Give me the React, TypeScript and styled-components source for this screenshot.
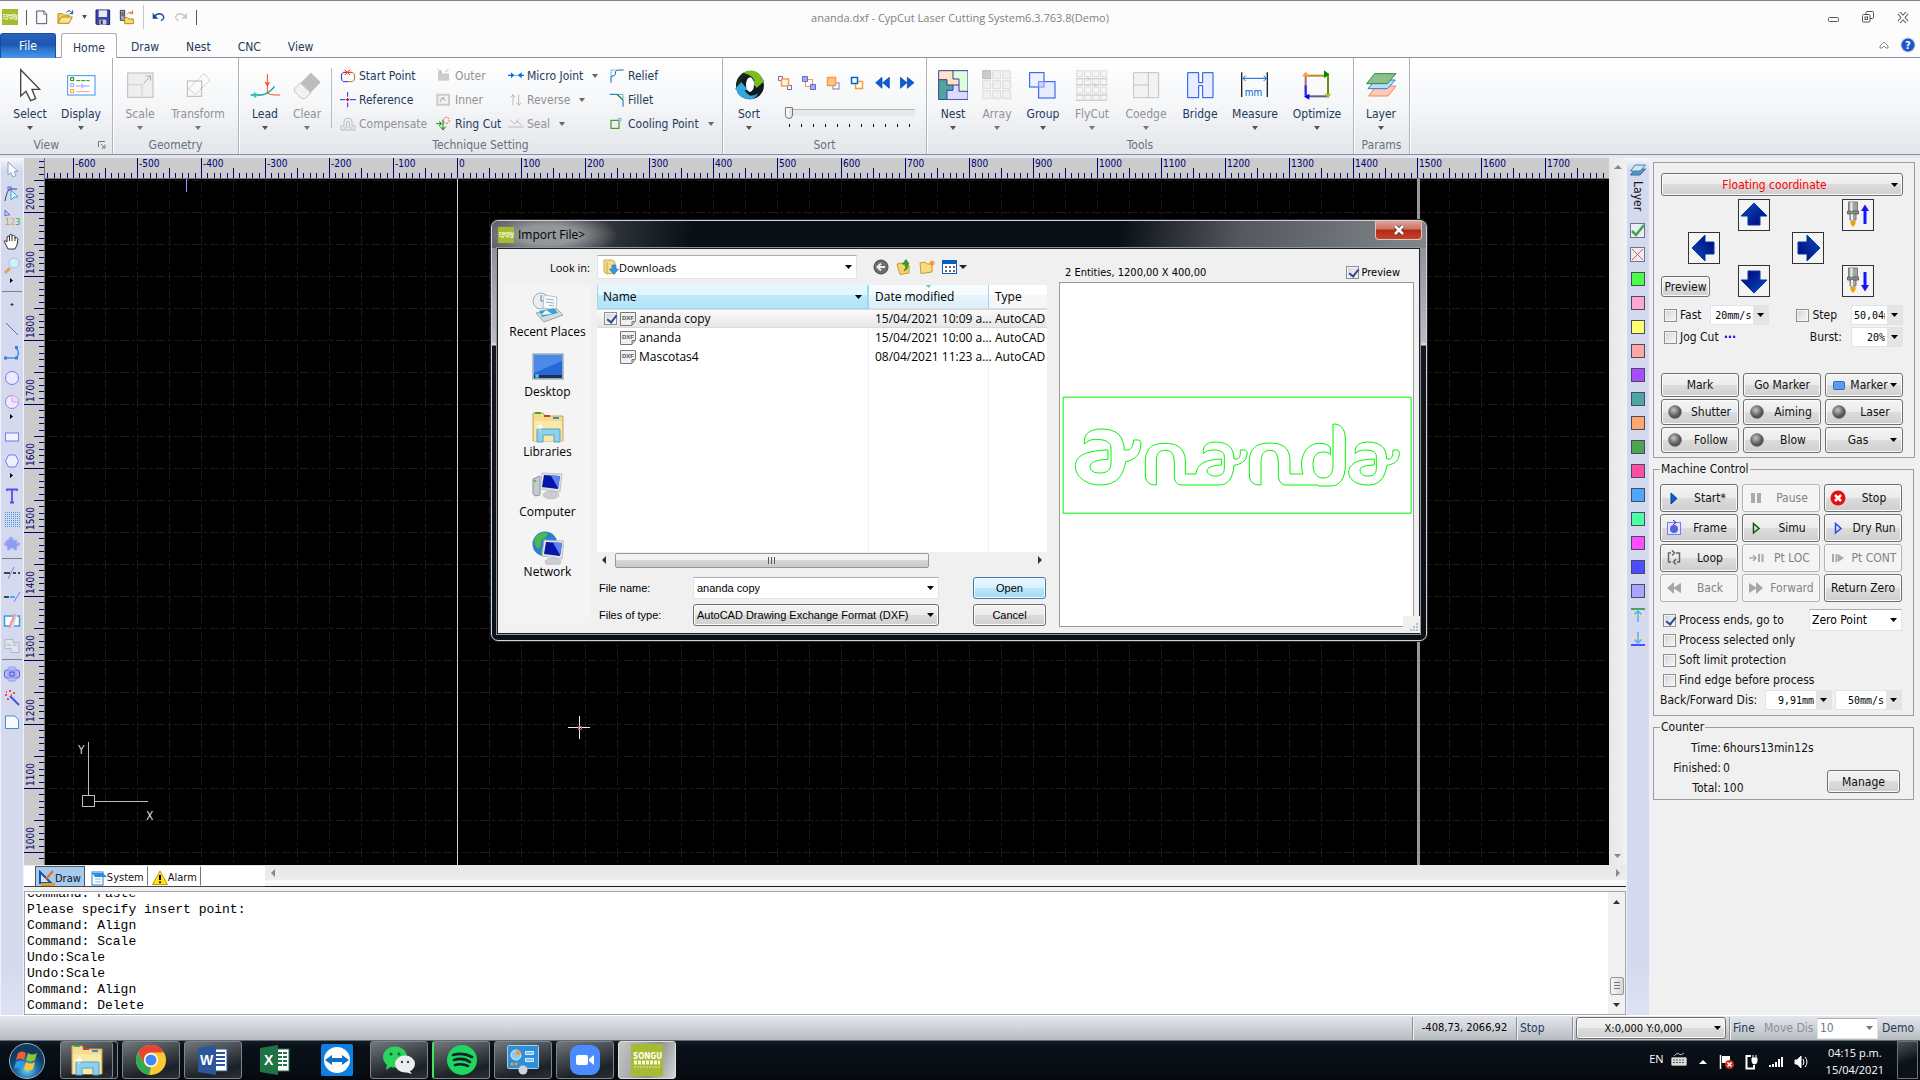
import React from "react";
import styled, { createGlobalStyle, css } from "styled-components";

const UI = '"DejaVu Sans Condensed", "DejaVu Sans", sans-serif';
const SEGOE = '"Open Sans", "Noto Sans", sans-serif';
const ARIAL = '"Liberation Sans", sans-serif';
const MONO = '"Liberation Mono", monospace';
const NAVY = "#1e395b";

const Global = createGlobalStyle`
  * { box-sizing: border-box; }
  body { margin: 0; background: #f0f0f0; font-family: ${UI}; font-size: 12px; color: #111; }
  button, input, select { font: inherit; color: inherit; margin: 0; }
  button { padding: 0; background: none; border: 0; }
  svg { display: block; flex: none; }
`;

/* ---------- shared drawing helper: art is plotted on a 3x grid ---------- */
type Box = [number, number, number, number];
const Art = ({ box, children }: { box: Box; children: React.ReactNode }) => (
  <svg width={box[2] / 3} height={box[3] / 3} viewBox={box.join(" ")} fill="none" aria-hidden="true">
    {children}
  </svg>
);
const Caret = ({ color = "#000", w = 7 }: { color?: string; w?: number }) => (
  <svg width={w} height={4} viewBox="0 0 8 4" preserveAspectRatio="none" aria-hidden="true">
    <path d="M0 0H8L4 4Z" fill={color} />
  </svg>
);

/* ---------- shell ---------- */
const Shell = styled.div`
  position: relative;
  display: flex;
  flex-direction: column;
  height: 100vh;
  min-width: 1440px;
  overflow: hidden;
  background: #f0f0f0;
`;

/* ---------- title bar ---------- */
const TitleBar = styled.header`
  display: grid;
  grid-template-columns: 1fr auto 1fr;
  align-items: center;
  height: 33px;
  border-top: 1px solid #82858f;
  background: #fcfcfc;
`;
const Quick = styled.div`
  display: flex;
  align-items: center;
  gap: 8px;
  padding-left: 2px;
`;
const QuickSep = styled.i<{ $tall?: boolean }>`
  width: 1px;
  height: ${(p) => (p.$tall ? 24 : 15)}px;
  background: ${(p) => (p.$tall ? "#c4c6ca" : "#555")};
`;
const IconButton = styled.button`
  display: grid;
  place-items: center;
`;
const Caption = styled.h1`
  margin: 0;
  font-family: ${SEGOE};
  font-size: 11px;
  font-weight: 400;
  color: #808080;
`;
const WinButtons = styled.div<{ $gap: number; $end: number }>`
  display: flex;
  justify-content: flex-end;
  align-items: center;
  gap: ${(p) => p.$gap}px;
  padding-right: ${(p) => p.$end}px;
`;
const Tabs = styled.nav`
  display: flex;
  height: 25px;
  background: #fcfcfc;
  border-bottom: 1px solid #8b8e98;
`;
const FileTab = styled.button`
  width: 56px;
  height: 25px;
  margin-right: 5px;
  color: #fff;
  border: 1px solid #1b4fa4;
  border-bottom: 0;
  border-radius: 3px 3px 0 0;
  background: linear-gradient(#2a63bd, #1d56b0 45%, #2d70ca 60%, #4698ea);
`;
const Tab = styled.button<{ $on?: boolean }>`
  height: 24px;
  margin-right: 1px;
  padding: 4px ${(p) => (p.$on ? 11 : 13)}px 0;
  color: ${NAVY};
  ${(p) =>
    p.$on &&
    css`
      height: 25px;
      border: 1px solid #a9acb3;
      border-bottom: 0;
      border-radius: 3px 3px 0 0;
      background: #fff;
    `}
`;
const TabsEnd = styled.div`
  display: flex;
  align-items: center;
  gap: 11px;
  margin-left: auto;
  padding-right: 4px;
`;

/* ---------- ribbon ---------- */
const Ribbon = styled.div`
  display: flex;
  height: 97px;
  background: linear-gradient(#fff, #f4f6f8 50%, #e3e6ea);
  border-bottom: 1px solid #8b8e98;
`;
const RGroup = styled.section<{ $w: number }>`
  display: flex;
  flex-direction: column;
  flex: none;
  width: ${(p) => p.$w}px;
  border-right: 1px solid #b0b3b9;
  box-shadow: 1px 0 #fff;
`;
const RBody = styled.div<{ $pad?: number }>`
  display: flex;
  height: 78px;
  padding-left: ${(p) => p.$pad ?? 0}px;
`;
const RLabel = styled.div<{ $launch?: boolean }>`
  display: flex;
  justify-content: ${(p) => (p.$launch ? "flex-end" : "center")};
  align-items: center;
  gap: 39px;
  height: 18px;
  padding-right: ${(p) => (p.$launch ? 6 : 0)}px;
  color: #68717f;
`;
const Big = styled.button<{ $w: number }>`
  display: flex;
  flex: none;
  flex-direction: column;
  align-items: center;
  width: ${(p) => p.$w}px;
  padding-top: 9px;
  color: ${NAVY};
  white-space: nowrap;
  &:disabled { color: #929292; }
`;
const BigIcon = styled.span`
  display: grid;
  place-items: center;
  height: 36px;
`;
const BigText = styled.span`
  line-height: 16px;
  margin: 3px 0 4px;
`;
const RDivider = styled.i`
  width: 1px;
  height: 60px;
  margin: 10px 8px 0 3px;
  background: #b9bcc2;
`;
const SmallCol = styled.div<{ $w: number }>`
  display: flex;
  flex-direction: column;
  flex: none;
  width: ${(p) => p.$w}px;
  padding-top: 6px;
`;
const Small = styled.button`
  display: grid;
  grid-template-columns: 16px auto auto 1fr;
  column-gap: 3px;
  align-items: center;
  height: 24px;
  color: ${NAVY};
  text-align: left;
  white-space: nowrap;
  &:disabled { color: #929292; }
  svg:nth-of-type(2) { margin-left: 6px; }
`;
const SortPane = styled.div`
  display: flex;
  flex-direction: column;
  padding: 17px 0 0 7px;
  width: 146px;
`;
const SortIcons = styled.div`
  display: flex;
  align-items: center;
  gap: 10px;
  height: 16px;
`;
const SortSlider = styled.input`
  appearance: none;
  width: 130px;
  height: 14px;
  margin: 15px 0 0 7px;
  background: linear-gradient(#b4b6b9, #b4b6b9) 0 3px / 100% 1px no-repeat, linear-gradient(#e8eaea, #e8eaea) 0 4px / 100% 6px no-repeat;
  &::-webkit-slider-thumb {
    appearance: none;
    width: 8px;
    height: 12px;
    border: 1px solid #777;
    border-radius: 1px 1px 4px 4px;
    background: linear-gradient(90deg, #fff, #ddd);
  }
`;

type BigProps = { label: string; w: number; off?: boolean; noCaret?: boolean; children: React.ReactNode };
const BigButton = ({ label, w, off, noCaret, children }: BigProps) => (
  <Big $w={w} disabled={off}>
    <BigIcon>{children}</BigIcon>
    <BigText>{label}</BigText>
    {!noCaret && <Caret color={off ? "#777" : "#555"} w={6} />}
  </Big>
);
type SmallProps = { label: string; off?: boolean; caret?: boolean; children: React.ReactNode };
const SmallButton = ({ label, off, caret, children }: SmallProps) => (
  <Small disabled={off}>
    {children}
    <span>{label}</span>
    {caret && <Caret color="#666" w={6} />}
  </Small>
);

/* ---------- brand mark ---------- */
const Brand = ({ size }: { size: number }) => (
  <svg width={size} height={size} viewBox="0 0 48 48" aria-hidden="true">
    <rect width="48" height="48" fill="#a8ba32" />
    <path d="M3 17h7M3 22h7M13 17h6v5h-6zM23 22v-6l5 6v-6M38 16h-6v6h6v-3M41 16v6h5v-6M3 28h5M11 26v5h5v-5M20 26h5v5M29 31v-5h4v5M37 26h8v5h-8" stroke="#f4f8d8" strokeWidth="3" fill="none" />
  </svg>
);

/* ---------- workspace ---------- */
const Work = styled.main`
  display: flex;
  flex: 1;
  min-height: 0;
  border-top: 3px solid #e4e7ef;
`;
const ToolStrip = styled.aside`
  display: flex;
  flex: none;
  flex-direction: column;
  width: 24px;
  background: linear-gradient(#f6f8fc, #d4d9ed 12px, #d4d9ed 94%, #dde2f3);
  border-left: 1px solid #eef1fa;
  border-right: 1px solid #eef1fa;
`;
const Tool = styled.button`
  display: grid;
  place-items: center;
  height: 24px;
`;
const Flyout = styled.button`
  display: flex;
  justify-content: center;
  height: 11px;
`;
const StripRule = styled.hr`
  width: 20px;
  height: 1px;
  margin: 2px auto;
  border: 0;
  background: #7d7f88;
`;
const Center = styled.div`
  display: flex;
  flex: 1;
  flex-direction: column;
  min-width: 0;
`;
const Board = styled.div`
  display: grid;
  grid-template-columns: 21px minmax(0, 1fr) 17px;
  grid-template-rows: 21px minmax(0, 1fr);
  flex: 1;
  min-height: 0;
`;
const Ruler = styled.div<{ $side?: boolean }>`
  overflow: hidden;
  background: #cbcbcb;
  ${(p) => (p.$side ? "grid-row: 1 / 3; border-right: 1px solid #777;" : "border-bottom: 1px solid #777;")}
`;
const RulerText = styled.text`
  font: 10px ${UI};
  fill: #00007c;
`;
const Stage = styled.div`
  overflow: hidden;
  background: #000;
`;
const VScroll = styled.div`
  display: flex;
  grid-row: 1 / 3;
  grid-column: 3;
  flex-direction: column;
  justify-content: space-between;
  align-items: center;
  padding: 7px 0;
  background: linear-gradient(90deg, #e7e7e7, #f1f1f1);
`;
const BottomBar = styled.div`
  display: flex;
  flex: none;
  height: 22px;
  border-top: 1px solid #e8e8e8;
`;
const LogTabs = styled.div`
  display: flex;
  width: 241px;
  padding-left: 11px;
  background: #fff;
  border-bottom: 1px solid #444;
`;
const LogTab = styled.button<{ $on?: boolean }>`
  display: flex;
  align-items: center;
  padding: 3px 3px 0;
  font-size: 11px;
  border: 1px solid transparent;
  border-right-color: #777;
  ${(p) => p.$on && "background: #a6caf0; border-color: #555; border-bottom: 0; margin-right: 2px;"}
`;
const HScroll = styled.div`
  display: flex;
  flex: 1;
  justify-content: space-between;
  align-items: center;
  height: 21px;
  padding: 0 6px 6px;
  background: linear-gradient(#e8e8e8, #ededed 14px, #fff 15px, #f4f4f4 19px);
  border-bottom: 1px solid #222;
`;
const LogBox = styled.div`
  display: flex;
  flex: none;
  height: 124px;
  margin-top: 4px;
  border: 1px solid #a2a5ab;
  background: #fff;
`;
const LogLines = styled.div`
  display: flex;
  flex: 1;
  flex-direction: column;
  justify-content: flex-end;
  overflow: hidden;
  margin-top: 2px;
  padding-left: 2px;
  font: 13px/16px ${MONO};
  color: #000;
`;
const LogLine = styled.div`
  flex: none;
`;
const LogScroll = styled.div`
  display: flex;
  flex-direction: column;
  align-items: center;
  width: 17px;
  padding: 8px 0 7px;
  background: #f1f1f1;
`;
const LogThumb = styled.i`
  width: 14px;
  height: 18px;
  margin: auto 0 8px;
  border: 1px solid #979797;
  border-radius: 2px;
  background: repeating-linear-gradient(#777 0 1px, transparent 1px 3px) 3px 4px / 6px 8px no-repeat, linear-gradient(90deg, #f6f6f6, #d6d6d6);
`;

/* ---------- layer strip ---------- */
const LayerText = styled.span`
  writing-mode: vertical-rl;
  align-self: center;
  height: 36px;
  margin: -1px 0 2px;
  line-height: 14px;
`;
const Swatch = styled.i<{ $c: string }>`
  width: 14px;
  height: 14px;
  border: 1px solid #4a4d55;
  background: ${(p) => p.$c};
`;

/* ---------- control panel ---------- */
const Panel = styled.aside`
  flex: none;
  width: 270px;
  padding: 4px 5px 0 3px;
`;
const Card = styled.section`
  padding: 10px 11px 4px 7px;
  border: 1px solid #9b9da1;
`;
const Field = styled.fieldset`
  margin: 4px 1px 0 0;
  padding: 8px 11px 5px 6px;
  border: 1px solid #9b9da1;
  min-width: 0;
`;
const Legend = styled.legend`
  padding: 0 1px;
  line-height: 14px;
`;
const face = css`
  border: 1px solid #707070;
  border-radius: 3px;
  background: linear-gradient(#f4f4f4, #ebebeb 50%, #dcdcdc 50%, #cfcfcf);
  box-shadow: inset 0 0 0 1px #fafafa;
`;
const PushButton = styled.button<{ $h?: number; $w?: number }>`
  display: flex;
  align-items: center;
  justify-content: center;
  height: ${(p) => p.$h ?? 26}px;
  ${(p) => p.$w && `width: ${p.$w}px;`}
  ${face}
  white-space: nowrap;
  overflow: hidden;
  &:disabled { color: #838383; border-color: #adb2b5; background: #f4f4f4; }
`;
const BtnIcon = styled.span`
  display: grid;
  place-items: center;
  flex: none;
  width: 18px;
  margin-left: 4px;
`;
const BtnText = styled.span`
  flex: 1;
  text-align: center;
`;
const BtnTail = styled.span`
  margin-right: 5px;
`;
const ButtonGrid = styled.div<{ $top: number }>`
  display: grid;
  grid-template-columns: repeat(3, minmax(0, 1fr));
  gap: 2px 4px;
  margin-top: ${(p) => p.$top}px;
`;
const JogPad = styled.div`
  display: grid;
  grid-template-columns: 27px 32px 18px 32px 22px 32px 18px 32px;
  grid-template-rows: 32px 32px 32px;
  row-gap: 1px;
  margin-top: 3px;
`;
const JogButton = styled.button<{ $c: number; $r: number }>`
  display: grid;
  place-items: center;
  grid-column: ${(p) => p.$c};
  grid-row: ${(p) => p.$r};
  border: 1px solid #333;
  background: #f4f4f4;
`;
const JogPreview = styled(PushButton)`
  grid-column: 1 / 3;
  grid-row: 3;
  align-self: end;
  width: 49px;
`;
const Row = styled.div<{ $top?: number }>`
  display: flex;
  align-items: center;
  height: 20px;
  margin-top: ${(p) => p.$top ?? 0}px;
`;
const Spacer = styled.i<{ $w?: number }>`
  flex: ${(p) => (p.$w ? `0 0 ${p.$w}px` : "1")};
`;
const Check = styled.label`
  display: flex;
  align-items: center;
  gap: 3px;
  padding-left: 3px;
  white-space: nowrap;
`;
const Tick = styled.input.attrs({ type: "checkbox" })`
  appearance: none;
  position: relative;
  flex: none;
  width: 13px;
  height: 13px;
  border: 1px solid #8e8f8f;
  background: linear-gradient(135deg, #cfd2d6, #fafafa);
  box-shadow: inset 0 0 0 1px #f4f4f4;
  &:checked::after {
    content: "";
    position: absolute;
    left: 4px;
    top: 0;
    width: 4px;
    height: 8px;
    border: solid #2f4a8c;
    border-width: 0 2px 2px 0;
    transform: rotate(38deg);
  }
`;
const Dots = styled.button`
  margin-left: 5px;
  color: #0000ff;
  font-weight: 700;
`;
const PickBox = styled.span<{ $w?: number; $h: number; $look: "face" | "plain" | "spin"; $mr?: number }>`
  display: grid;
  grid-template-columns: minmax(0, 1fr) 16px;
  align-items: center;
  flex: none;
  ${(p) => (p.$w ? `width: ${p.$w}px;` : "width: 100%;")}
  height: ${(p) => p.$h}px;
  margin-right: ${(p) => p.$mr ?? 0}px;
  background: #fff;
  border: 1px solid #dfe3ea;
  border-top-color: #abadb3;
  ${(p) => p.$look === "face" && face}
  ${(p) => p.$look === "spin" && "border-top-color: #dfe3ea; background: linear-gradient(90deg, transparent calc(100% - 15px), #e4e4e4 0), #fff;"}
`;
const Pick = styled.select<{ $font?: string; $size?: number; $align?: string; $color?: string; $pad?: number }>`
  appearance: none;
  grid-area: 1 / 1 / 2 / 3;
  width: 100%;
  height: 100%;
  padding: 0 17px 0 ${(p) => p.$pad ?? 2}px;
  border: 0;
  background: transparent;
  font-family: ${(p) => p.$font ?? UI};
  font-size: ${(p) => p.$size ?? 12}px;
  text-align: ${(p) => p.$align ?? "left"};
  text-align-last: ${(p) => p.$align ?? "left"};
  color: ${(p) => p.$color ?? "#000"};
`;
const PickArrow = styled.span`
  grid-area: 1 / 2;
  justify-self: center;
  pointer-events: none;
`;
type DropProps = {
  name: string; value: string; w?: number; h: number; look?: "face" | "plain" | "spin";
  font?: string; size?: number; align?: string; color?: string; pad?: number; arrow?: string; mr?: number;
};
const Drop = ({ name, value, w, h, look = "plain", arrow, mr, ...t }: DropProps) => (
  <PickBox $w={w} $h={h} $look={look} $mr={mr}>
    <Pick aria-label={name} $font={t.font} $size={t.size} $align={t.align} $color={t.color} $pad={t.pad}>
      <option>{value}</option>
    </Pick>
    <PickArrow><Caret color={arrow} /></PickArrow>
  </PickBox>
);
const Spin = (p: { name: string; value: string; w: number; mr?: number }) => (
  <Drop {...p} h={20} look="spin" font='"DejaVu Sans Mono", monospace' size={10} align="right" />
);
const CounterBody = styled.div`
  display: flex;
  justify-content: space-between;
  align-items: flex-end;
  padding-right: 2px;
`;
const Stats = styled.dl`
  display: grid;
  grid-template-columns: 61px auto;
  column-gap: 2px;
  margin: 0;
  line-height: 20px;
  dt { text-align: right; }
  dd { margin: 0; }
`;
const ManageSlot = styled.div`
  padding-bottom: 5px;
`;
const CounterField = styled(Field)`
  padding-top: 4px;
  padding-bottom: 1px;
`;

/* ---------- status bar ---------- */
const Status = styled.footer`
  display: flex;
  justify-content: flex-end;
  align-items: center;
  flex: none;
  height: 25px;
  padding-right: 5px;
  color: ${NAVY};
  border-top: 1px solid #fff;
  background: linear-gradient(#e3e6ea, #cfd3d8 50%, #b5babf);
`;
const Cell = styled.span<{ $w: number; $dark?: boolean; $off?: boolean; $line?: boolean; $mid?: boolean }>`
  width: ${(p) => p.$w}px;
  height: 23px;
  line-height: 22px;
  white-space: nowrap;
  text-align: ${(p) => (p.$mid ? "center" : "left")};
  padding-left: ${(p) => (p.$mid ? 0 : 3)}px;
  ${(p) => p.$dark && "color: #000; font-size: 11px;"}
  ${(p) => p.$off && "color: #8c9097;"}
  ${(p) => p.$line && "border-left: 1px solid #8b9097; box-shadow: inset 1px 0 #eef0f2;"}
`;

/* ---------- taskbar ---------- */
const Taskbar = styled.footer`
  display: flex;
  flex: none;
  height: 40px;
  padding: 0 2px 0 6px;
  border-top: 1px solid #5c6b76;
  background: linear-gradient(#141c24, #0a1017 6px, #080d14 32px, #05080c);
`;
const Orb = styled.button`
  display: grid;
  place-items: center;
  width: 42px;
  margin-right: 12px;
`;
const Task = styled.button<{ $kind?: "open" | "pinned" | "active" | "stack" | "alert" }>`
  display: grid;
  place-items: center;
  flex: none;
  width: 58px;
  height: 38px;
  margin: 0 4px 0 0;
  border: 1px solid transparent;
  border-radius: 3px;
  ${(p) =>
    p.$kind !== "pinned" &&
    css`
      border-color: #7f858b;
      background: linear-gradient(165deg, #73787d, #43484d 40%, #1b2127 75%, #2b3036);
    `}
  ${(p) => p.$kind === "active" && "border-color: #e0e0e0; background: linear-gradient(110deg, #c8c8c8, #8d8f91 60%, #d5d5d5);"}
  ${(p) => p.$kind === "stack" && "padding-right: 4px; box-shadow: inset -4px 0 #14191e, inset -5px 0 #7f858b;"}
  ${(p) => p.$kind === "alert" && "border-left: 2px solid #42e65a;"}
`;
const Tray = styled.div`
  display: flex;
  align-items: center;
  margin-left: auto;
  color: #fff;
  font-family: ${SEGOE};
`;
const TrayIcons = styled.div`
  display: flex;
  align-items: center;
  gap: 10px;
  margin: 3px 18px 0 12px;
`;
const Lang = styled.span`
  margin-right: 7px;
  padding-bottom: 5px;
  font-size: 11px;
`;
const KeyboardSlot = styled.span`
  padding-bottom: 3px;
`;
const Clock = styled.time`
  margin-right: 13px;
  text-align: center;
  font-size: 11px;
  line-height: 17px;
`;
const Peek = styled.button`
  align-self: flex-start;
  width: 21px;
  height: 38px;
  border: 1px solid #6a7178;
  background: linear-gradient(160deg, #4c5359, #0d1217 55%);
`;

/* ---------- import dialog ---------- */
const Dialog = styled.div`
  position: absolute;
  left: 491px;
  top: 220px;
  width: 936px;
  padding: 0 6px 6px 5px;
  border: 1px solid #cdd3d8;
  border-radius: 7px;
  background: linear-gradient(#85898e, #b8bbbf 120px, #e0e2e4 124px, #15191d 125px, #0b1015);
  box-shadow: 0 0 0 1px #23272b;
  font-family: ${SEGOE};
  color: #000;
`;
const DialogTop = styled.div`
  display: flex;
  align-items: center;
  height: 27px;
  margin: 0 -6px 0 -5px;
  padding-left: 6px;
  border-radius: 6px 6px 0 0;
  background: radial-gradient(ellipse 70px 24px at 56px 14px, #94979a 40%, transparent 100%), linear-gradient(100deg, #55595d, #33383d 110px, #0a0f16 200px, #0a0f16 67%, #55595e 80%, #82878c);
`;
const DialogTitle = styled.h2`
  flex: 1;
  margin: 0 0 0 4px;
  font-size: 12px;
  font-weight: 400;
`;
const CloseButton = styled.button`
  display: grid;
  place-items: center;
  align-self: flex-start;
  width: 47px;
  height: 19px;
  margin-right: 4px;
  border: 1px solid #e2c4bd;
  border-top: 0;
  border-radius: 0 0 4px 4px;
  background: linear-gradient(#e0a295, #cd7464 45%, #b02a12 50%, #c5432b);
`;
const DialogBody = styled.div`
  display: flex;
  height: 386px;
  border: 1px solid #1d2126;
  outline: 1px solid #8f959a;
  background: #f0f0f0;
`;
const Browse = styled.div`
  flex: none;
  width: 549px;
`;
const LookRow = styled.div`
  display: flex;
  align-items: center;
  height: 36px;
`;
const LookLabel = styled.label`
  width: 92px;
  margin-right: 7px;
  text-align: right;
  font-size: 11px;
`;
const LookBox = styled.div`
  position: relative;
  display: flex;
  width: 260px;
`;
const FolderBadge = styled.span`
  position: absolute;
  left: 6px;
  top: 4px;
  pointer-events: none;
`;
const LookTools = styled.div`
  display: flex;
  align-items: center;
  gap: 7px;
  margin-left: 16px;
`;
const Split = styled.div`
  display: flex;
`;
const Places = styled.nav`
  display: flex;
  flex-direction: column;
  width: 87px;
  height: 338px;
  margin: 0 6px;
  padding-top: 4px;
  background: #f4f4f4;
`;
const Place = styled.button`
  display: flex;
  flex-direction: column;
  align-items: center;
  justify-content: flex-end;
  height: 60px;
  line-height: 18px;
  padding-bottom: 8px;
  white-space: nowrap;
`;
const PlaceIcon = styled.span`
  display: grid;
  place-items: center;
  height: 32px;
`;
const Files = styled.div`
  flex: 1;
  min-width: 0;
`;
const ListPane = styled.div`
  height: 267px;
  overflow: hidden;
  background:
    linear-gradient(#eaf2fb, #eaf2fb) 271px 0 / 1px 100% no-repeat,
    linear-gradient(#eaf2fb, #eaf2fb) 391px 0 / 1px 100% no-repeat,
    #fff;
`;
const FileTable = styled.table`
  width: 100%;
  table-layout: fixed;
  border-collapse: separate;
  border-spacing: 0;
  th {
    height: 24px;
    padding: 0 6px;
    font-weight: 400;
    text-align: left;
    border-bottom: 1px solid #d8dde2;
    background: linear-gradient(#fff 45%, #f5f7f8 45%, #f3f5f7);
  }
  th:first-child {
    background: linear-gradient(#e3f7ff 42%, #bde9fb 42%, #b3e4f9);
    border: solid #96d9f9;
    border-width: 0 2px 1px 1px;
    padding: 0 5px;
  }
  th:nth-child(2) { background: linear-gradient(#f5fcff 42%, #e8f4fa 42%, #ddeff8); border-right: 1px solid #96d9f9; }
  td {
    height: 19px;
    padding: 0 0 0 6px;
    white-space: nowrap;
  }
  td:first-child { padding-left: 7px; }
  tr[aria-selected="true"] td { background: linear-gradient(#fbfbfb, #e6e6e6); border: solid #d9d9d9; border-width: 1px 0; }
`;
const HeadCell = styled.span`
  display: flex;
  justify-content: space-between;
  align-items: center;
`;
const SortMark = styled.span`
  display: grid;
  justify-content: center;
  height: 4px;
  margin-top: -4px;
`;
const NameCell = styled.span`
  display: flex;
  align-items: center;
  gap: 3px;
`;
const TickSlot = styled.span`
  display: flex;
  width: 13px;
`;
const ListScroll = styled.div`
  display: flex;
  align-items: center;
  height: 16px;
  padding: 0 5px;
  background: #f0f0f0;
`;
const ListThumb = styled.i`
  width: 314px;
  height: 15px;
  margin: 0 auto 0 8px;
  border: 1px solid #979797;
  border-radius: 2px;
  background: repeating-linear-gradient(90deg, #555 0 1px, transparent 1px 3px) center / 8px 7px no-repeat, linear-gradient(#f3f3f3 45%, #dadada 45%, #c9c9c9);
`;
const FormRow = styled.div<{ $top: number }>`
  display: flex;
  align-items: center;
  margin-top: ${(p) => p.$top}px;
  font: 11px ${ARIAL};
`;
const FormLabel = styled.label`
  width: 96px;
  padding-left: 2px;
`;
const FileInputBox = styled.span`
  display: grid;
  grid-template-columns: 1fr 16px;
  align-items: center;
  width: 246px;
  height: 22px;
  border: 1px solid #dfe3ea;
  border-top-color: #abadb3;
  background: #fff;
  svg { justify-self: center; }
`;
const FileInput = styled.input`
  min-width: 0;
  padding: 0 3px;
  border: 0;
  background: none;
`;
const DialogButton = styled.button<{ $hot?: boolean }>`
  width: 73px;
  height: 22px;
  margin-left: 34px;
  ${face}
  ${(p) => p.$hot && "border-color: #3c7fb1; background: linear-gradient(#eaf6fd, #d9f0fc 50%, #bee6fd 50%, #a7d9f5);"}
`;
const PreviewPane = styled.div`
  flex: 1;
  padding: 0 5px 6px 12px;
  font-family: ${UI};
  font-size: 11px;
`;
const PreviewHead = styled.div`
  display: flex;
  justify-content: space-between;
  align-items: center;
  height: 33px;
  padding: 13px 14px 0 6px;
`;
const PreviewBox = styled.div`
  position: relative;
  height: 345px;
  border: 1px solid #9a9a9a;
  background: #fff;
`;
const Grip = styled.span`
  position: absolute;
  right: -7px;
  bottom: -7px;
  padding: 7px 2px 2px 7px;
  background: #f0f0f0;
`;

/* ---------- rulers and stage ---------- */
const STEP = 0.64;
const HRuler = () => {
  const ticks: React.ReactNode[] = [];
  for (let v = -640; v <= 1860; v += 10) {
    const x = Math.round(412 + v * STEP);
    const top = v % 100 === 0 ? 0 : v % 50 === 0 ? 10 : 15;
    ticks.push(<path key={v} d={`M${x + 0.5} ${top}V20`} stroke="#00007c" />);
    if (v % 100 === 0 && v < 1800) ticks.push(<RulerText key={"t" + v} x={x + 2} y={9}>{v}</RulerText>);
  }
  return <svg width="100%" height="20">{ticks}</svg>;
};
const VRuler = () => {
  const ticks: React.ReactNode[] = [];
  for (let v = 2080; v >= 990; v -= 10) {
    const y = Math.round(694 - (v - 1000) * STEP);
    const left = v % 100 === 0 ? 0 : v % 50 === 0 ? 10 : 15;
    ticks.push(<path key={v} d={`M${left} ${y + 0.5}H20`} stroke="#00007c" />);
    if (v % 100 === 0) ticks.push(<RulerText key={"t" + v} transform={`translate(10 ${y - 2}) rotate(-90)`}>{v}</RulerText>);
  }
  return <svg width="20" height="100%">{ticks}</svg>;
};
const StageArt = () => {
  const rows = Array.from({ length: 34 }, (_, i) => 1 + i * 32);
  const cols = Array.from({ length: 60 }, (_, i) => 28 + i * 32);
  return (
    <svg width="100%" height="100%" shapeRendering="crispEdges" fill="none">
      <g stroke="#1a1a1a" strokeDasharray="9 3 3 3">
        {rows.map((y) => <path key={y} d={`M3 ${y + 0.5}H2000`} />)}
        {cols.map((x) => <path key={"c" + x} d={`M${x + 0.5} 3V1100`} />)}
      </g>
      <path d="M412.5 0V1100" stroke="#cfcfcf" />
      <path d="M1373.5 0V1100" stroke="#989898" strokeWidth="3" />
      <path d="M141.5 0V13" stroke="#9a9aff" />
      <path d="M523 548.5H545M534.5 537V560" stroke="#e8e8e8" />
      <rect x="533" y="547" width="3" height="3" stroke="#c24a4a" />
      <path d="M43.5 563V617M50 622.5H103M37.5 616.5h12v11h-12z" stroke="#bdbdbd" />
      <g fontFamily={UI} fontSize="12">
        <text x="33" y="575" fill="#b8d8e8">Y</text>
        <text x="101" y="641" fill="#dadada">X</text>
      </g>
    </svg>
  );
};

/* ---------- left tool drawings ---------- */
const T = ({ children }: { children: React.ReactNode }) => (
  <svg width="18" height="18" viewBox="0 0 18 18" fill="none" aria-hidden="true">{children}</svg>
);
const FlyMark = () => <svg width="4" height="5" aria-hidden="true"><path d="M0 0L3 2.500L0 5Z" fill="#000" /></svg>;
const tools: Record<string, React.ReactNode> = {
  Pick: <T><path d="M5 1v13l3-2.500 2 4.500 3-1.500-2-4h4z" fill="#fff" stroke="#7ea6cc" /></T>,
  "Edit nodes": <T><path d="M2 16Q4 5 7 4H14" stroke="#444" /><rect x="5" y="2" width="3" height="3" stroke="#55f" /><path d="M8 5v10l3-3h4z" fill="#dff" stroke="#3da0dd" /></T>,
  "Sort order": <T><path d="M2 1v6l2-1 3 0z" fill="#ccf" stroke="#66d" /><text x="2" y="16" fontSize="9" fontFamily={UI}><tspan fill="#c90">1</tspan><tspan fill="#da3">2</tspan><tspan fill="#3a3">3</tspan></text></T>,
  Pan: <T><path d="M5 16L2 10Q0 8 2 7.500L4 9V4Q5 2 6.500 4V2Q8 .500 9 2V3Q11 1 12 3.500V5Q14 3.500 15 6L14 12 12 16Z" fill="#fff" stroke="#333" /><path d="M6.500 4V8M9 3V8M12 4V8" stroke="#333" /></T>,
  Zoom: <T><path d="M2 16L7 11" stroke="#e2a45c" strokeWidth="3" /><circle cx="11" cy="6" r="5" fill="#cdf2fb" stroke="#a7c3dd" /></T>,
  Point: <T><path d="M9 6v3M7.500 7.500h3" stroke="#333" /></T>,
  Line: <T><path d="M3 2L15 14" stroke="#4a6ee0" /></T>,
  Polyline: <T><path d="M2 13H13Q18 8 13 3" stroke="#4a8be8" strokeWidth="1.500" /><path d="M1 11.500h3v3H1zM12 11.500h3v3h-3zM12 1h3v3h-3z" fill="#3b7de0" /></T>,
  Circle: <T><circle cx="9" cy="9" r="6.500" fill="#eeeaff" stroke="#7779f5" /></T>,
  Pie: <T><circle cx="9" cy="9" r="6.500" fill="#eeeaff" stroke="#8a8cf0" /><path d="M9 2V9H16Q15 3 9 2" fill="#fbd6f2" stroke="#c9a8e6" /></T>,
  Rectangle: <T><rect x="2.500" y="5" width="13" height="8" fill="#f4f2ff" stroke="#7779f5" /></T>,
  Polygon: <T><path d="M5.500 3h7l3 6-3 6h-7l-3-6z" fill="#f0eeff" stroke="#7779f5" /></T>,
  Text: <T><path d="M4 4V2.500H14V4M9 3V15M7 15.500H11" stroke="#5050f0" strokeWidth="1.800" /></T>,
  "Dot grid": <T><path d="M2 1.500H17M2 3.500H17M2 5.500H17M2 7.500H17M2 9.500H17M2 11.500H17M2 13.500H17M2 15.500H17" stroke="#3f9ad8" strokeDasharray="1 1" /></T>,
  Plugin: <T><path d="M3 5h3q-1-3 2-3t2 3h4v3q3-1 3 1t-3 2v4h-3q0-2-2-2t-2 2H4v-4q-3 0-3-2t2-1z" fill="#8f9cf2" stroke="#b3bdf5" /></T>,
  Trim: <T><path d="M1 9H7M10 9H13M15 9H17" stroke="#444" strokeWidth="2" /><path d="M5 15L11 3" stroke="#77f" /></T>,
  Extend: <T><path d="M1 9H6" stroke="#444" strokeWidth="2" /><path d="M7 9H12" stroke="#3ab0ff" strokeWidth="2" /><path d="M11 14L17 4" stroke="#77f" /></T>,
  Cut: <T><path d="M10 4H1.500V14H6M11 14H16.500V4H14" fill="#fff" stroke="#4596dc" strokeWidth="1.500" /><path d="M6 16L12 2" stroke="#e99" strokeWidth="2" /></T>,
  Join: <T><path d="M2 3.500h8v3h6v10H8v-4H2z" fill="#dfe2ef" stroke="#b3b6c4" /><path d="M4 9h4M10 9h4" stroke="#aaa" /></T>,
  Combine: <T><rect x="1.500" y="5" width="15" height="8" rx="2" fill="#b5bdf8" stroke="#5260c8" /><rect x="5" y="2" width="8" height="14" rx="2" stroke="#8f9af4" fill="#aeb8fb" fillOpacity=".6" /><rect x="7" y="7" width="4" height="4" stroke="#44c" /></T>,
  Wand: <T><path d="M7 7L16 16" stroke="#45d" strokeWidth="2" /><path d="M2 6h2M4 10h2M6 2h2M10 4h2M3 3h1M8 6h1" stroke="#f44" strokeWidth="2" /></T>,
  Corner: <T><path d="M2.500 3H12L15.500 7V15.500H2.500Z" fill="#f8f9ff" stroke="#3f8fd8" /></T>,
};
const toolPlan: string[] = [
  "Pick", "Edit nodes", "Sort order", "Pan", "Zoom", ">", "-", "Point", "Line", "Polyline", "Circle", "Pie", ">",
  "Rectangle", "Polygon", ">", "Text", "Dot grid", "Plugin", "-", "Trim", "Extend", "Cut", "Join", "-", "Combine", "Wand", "Corner",
];
const swatches = [
  "#4dff4d", "#ffa6d2", "#ffff73", "#ffa6a6", "#a64dff", "#4da6a6", "#ffa673",
  "#4da64d", "#ff4da6", "#4da6ff", "#4dffa6", "#ff4dff", "#4d4dff", "#a6a6ff",
];

/* ---------- panel glyphs ---------- */
const Led = () => (
  <svg width="14" height="14" aria-hidden="true">
    <defs><radialGradient id="led" cx=".4" cy=".35"><stop offset="0" stopColor="#c4c4c4" /><stop offset="1" stopColor="#555" /></radialGradient></defs>
    <circle cx="7" cy="7" r="6.500" fill="url(#led)" stroke="#666" strokeWidth=".5" />
  </svg>
);
const Arrow = ({ turn }: { turn: number }) => (
  <svg width="28" height="28" viewBox="-14 -14 28 28" aria-hidden="true">
    <defs><linearGradient id="jog" x1="0" x2="1" y2="1"><stop stopColor="#0b52b8" /><stop offset="1" stopColor="#00007c" /></linearGradient></defs>
    <path transform={`rotate(${turn})`} d="M0 -12L13 1H6V10H-6V1H-13Z" fill="url(#jog)" stroke="#003a9c" />
  </svg>
);
const Nozzle = ({ down }: { down?: boolean }) => (
  <svg width="24" height="28" viewBox="0 0 24 28" aria-hidden="true">
    <path d="M2.500 1h9v9h-9zM4 13h6v6H4z" fill="#a4a4a4" stroke="#7a7a7a" />
    <path d="M1.500 10h11v3h-11z" fill="#8a8a8a" stroke="#666" />
    <path d="M5.500 1v9M6 13v6" stroke="#eee" strokeWidth="2" />
    <path d="M4.500 20h5v3l-2.500 3-2.500-3z" fill="#e8a800" />
    <path transform={down ? "matrix(1 0 0 -1 0 28)" : undefined} d="M17.500 23V10H15L19 3.500L23 10H20.500V23Z" fill="#1414ff" />
  </svg>
);
const PanelBtn = ({ label, icon, off, tail, h = 28 }: { label: string; icon?: React.ReactNode; off?: boolean; tail?: boolean; h?: number }) => (
  <PushButton disabled={off} $h={h}>
    {icon && <BtnIcon>{icon}</BtnIcon>}
    <BtnText>{label}</BtnText>
    {tail && <BtnTail><Caret /></BtnTail>}
  </PushButton>
);
const G = ({ children }: { children: React.ReactNode }) => (
  <svg width="16" height="16" viewBox="0 0 16 16" fill="none" aria-hidden="true">{children}</svg>
);

/* ---------- dialog glyphs ---------- */
const DxfIcon = () => (
  <svg width="16" height="14" viewBox="0 0 16 14" aria-hidden="true">
    <path d="M.500 .500H15.500V9L12 13.500H.500Z" fill="#f1f1f1" stroke="#777" />
    <path d="M12 13V9.500H15" fill="#ccc" stroke="#777" />
    <text x="2" y="8" fontSize="6" fontWeight="700" fontFamily={ARIAL} fill="#555">DXF</text>
  </svg>
);
const Monitor = ({ x = 0, y = 0 }: { x?: number; y?: number }) => (
  <g transform={`translate(${x} ${y})`}>
    <ellipse cx="11" cy="22" rx="8" ry="4" fill="#c9cdd1" stroke="#aeb3b8" strokeWidth=".5" />
    <path d="M2 0L22 1L20 19L0 16Z" fill="#dfe3e7" stroke="#a9aeb4" strokeWidth=".7" />
    <path d="M4 2L20 3L18 16L2 14Z" fill="#0716a8" />
    <path d="M11 2.500L20 3L18 15Z" fill="#5d86f2" />
  </g>
);
const LibraryArt = () => (
  <svg width="34" height="32" viewBox="0 0 34 32" aria-hidden="true">
    <path d="M2 2H12L14 5H32V30H2Z" fill="#f2dc8d" stroke="#c9a94d" />
    <path d="M4 1h6v2H4z" fill="#3aa83a" /><path d="M13 4h6v2h-6z" fill="#d23a2a" /><path d="M22 6h6v2h-6z" fill="#3a8ad2" />
    <path d="M3 10H31V30H3Z" fill="#f8e9a8" />
    <path d="M6 31V19Q6 18 7 18H28Q29 18 29 19V31H23V24H12V31Z" fill="#8fd0ea" stroke="#4ea2c9" />
    <path d="M9 12V20M5 16H13M7 14L11 18M11 14L7 18" stroke="#fff" strokeWidth=".8" />
  </svg>
);
const placeArt: [string, React.ReactNode][] = [
  ["Recent Places", <svg width="32" height="32" viewBox="0 0 32 32"><circle cx="9" cy="10" r="8" fill="#e9eef2" stroke="#a3adb5" /><path d="M9 4V10H13" stroke="#678" fill="none" /><path d="M12 4L25 6L24 19L11 17Z" fill="#fafcfd" stroke="#b8c0c6" /><path d="M14 8l8 1M14 11l8 1M17 14l5 1" stroke="#89b4cf" /><path d="M4 22L25 18L31 24L12 31Z" fill="#d8dcdf" stroke="#9ba2a8" /><path d="M7 20L22 17L26 22L10 26Z" fill="#3aa6cf" /><path d="M9 24L14 19L20 23Z" fill="#e9f6fb" /></svg>],
  ["Desktop", <svg width="32" height="28" viewBox="0 0 32 28"><rect x=".5" y=".5" width="31" height="26" fill="#8fa9bf" stroke="#b7c4cf" /><rect x="2" y="2" width="28" height="23" fill="#2569d6" /><path d="M2 2H30V8L2 20Z" fill="#5b98ee" opacity=".7" /><rect x="2" y="22" width="28" height="3" fill="#1b3350" /><circle cx="5" cy="23" r="2" fill="#4fc3e8" /></svg>],
  ["Libraries", <LibraryArt />],
  ["Computer", <svg width="32" height="30" viewBox="0 0 32 30"><path d="M1 7L8 4V23L3 24L1 22Z" fill="#c5cace" stroke="#8f969c" /><circle cx="3" cy="9" r="1.300" fill="#4c4" /><Monitor x={8} y={1} /></svg>],
  ["Network", <svg width="32" height="34" viewBox="0 0 32 34"><circle cx="13" cy="13" r="12.500" fill="#2f7fd0" /><path d="M3 6Q9 0 16 2Q14 8 9 9Q10 15 6 18Q1 13 3 6M10 16Q16 15 15 22Q12 26 9 24Z" fill="#4db84d" /><Monitor x={10} y={9} /></svg>],
];
const files = [
  { name: "ananda copy", date: "15/04/2021 10:09 a...", on: true },
  { name: "ananda", date: "15/04/2021 10:00 a..." },
  { name: "Mascotas4", date: "08/04/2021 11:23 a..." },
];
const Artwork = () => (
  <svg width="353" height="343" viewBox="61 205 1059 1029" fill="none" stroke="#00f500" strokeWidth="3" aria-hidden="true">
    <path d="M70.500 547.500H1114.500V895.500H70.500Z" />
    <path d="M134 688C130 655 155 643 185 643C230 643 252 662 254 706H264C278 703 281 692 281 676H296C304 678 305 684 303 694C302 720 285 736 258 741C250 790 225 811 180 811C140 811 107 785 107 755C107 722 140 708 205 706V734C170 736 151 742 151 757C153 770 165 775 180 775C205 775 214 764 214 745V700C213 680 195 674 165 674C150 675 145 680 134 688Z" />
    <path d="M350 811C325 811 317 800 317 775V745C317 700 335 686 378 686C420 686 437 708 437 740V778H469C472 748 495 735 545 733V751C515 752 502 760 502 768C504 780 515 784 528 784C546 784 554 775 554 760V725C553 710 540 706 520 706C505 706 500 710 491 716C488 690 505 682 530 682C568 684 582 700 583 733H592C602 730 602 720 602 706H615C624 708 623 715 621 724C618 740 605 748 583 752C580 790 565 811 540 811H430C410 811 404 800 404 785V745C403 715 395 707 376 707C355 707 350 720 350 745Z" />
    <path d="M664 811C637 811 629 800 629 775V745C629 700 650 685 690 685C730 685 751 700 751 740V778H790C776 735 795 686 840 686C856 686 862 690 872 697V720C868 713 860 712 848 712C828 714 820 728 820 750C820 775 832 790 850 790C872 790 880 775 880 750V628C905 627 916 645 917 670V750C918 790 900 814 875 814H838L835 811H740C722 811 716 795 716 780V745C714 718 710 707 690 707C668 707 664 725 664 745Z" />
    <path d="M946 716C945 690 962 682 988 682C1025 684 1040 700 1041 733H1050C1058 730 1060 722 1060 706H1072C1080 708 1080 715 1078 724C1075 742 1062 748 1042 752C1035 790 1020 811 985 811C950 811 927 795 927 772C928 750 948 734 1004 733V751C975 752 961 757 961 766C963 780 972 784 985 784C1004 784 1010 775 1010 760V725C1010 710 995 706 975 706C960 706 955 710 946 716Z" />
  </svg>
);

const ImportDialog = () => (
  <Dialog role="dialog" aria-label="Import File">
    <DialogTop>
      <Brand size={16} />
      <DialogTitle>Import File&gt;</DialogTitle>
      <CloseButton aria-label="Close">
        <svg width="12" height="10" viewBox="0 0 12 10"><path d="M2 1L10 9M10 1L2 9" stroke="#5a2a22" strokeWidth="4" /><path d="M2 1L10 9M10 1L2 9" stroke="#fff" strokeWidth="2.500" /></svg>
      </CloseButton>
    </DialogTop>
    <DialogBody>
      <Browse>
        <LookRow>
          <LookLabel>Look in:</LookLabel>
          <LookBox>
            <Drop name="Look in" value="Downloads" h={24} font={SEGOE} size={11} pad={21} />
            <FolderBadge>
              <svg width="16" height="16" viewBox="0 0 16 16"><path d="M1 1H9L12 3V14L4 15L1 13Z" fill="#f3dc8a" stroke="#cda945" /><path d="M4 3V15" stroke="#cda945" /><path d="M9 6h4v4h2.500L11 15.500 6.500 10H9z" fill="#2f9be8" stroke="#1b6fb4" strokeWidth=".6" /></svg>
            </FolderBadge>
          </LookBox>
          <LookTools>
            <IconButton aria-label="Back"><G><circle cx="8" cy="8" r="7" fill="#6f6f6f" stroke="#444" /><path d="M12 8H5M8 4.500L4.500 8L8 11.500" stroke="#eee" strokeWidth="2" /></G></IconButton>
            <IconButton aria-label="Up one level"><G><path d="M1 5l5-1 2 2h5v8l-9 1.500z" fill="#f3d56c" stroke="#c59a2c" /><path d="M8 12Q11 9 9 5H6.500L10 .500 13 5H11.500Q13 10 8 12" fill="#2aa82a" stroke="#167016" strokeWidth=".6" /></G></IconButton>
            <IconButton aria-label="New folder"><G><path d="M1 4l5-1 2 2h5v8l-11 1.500z" fill="#f7dd7c" stroke="#c59a2c" /><path d="M13 1v6M10 4h6M11 2l4 4M15 2l-4 4" stroke="#f08a2c" /></G></IconButton>
            <IconButton aria-label="Views">
              <svg width="25" height="15" viewBox="0 0 25 15"><rect x=".5" y=".5" width="14" height="13" fill="#fff" stroke="#0a5fc4" /><path d="M1 2.500H14" stroke="#0a5fc4" strokeWidth="3" /><path d="M3 7h2M7 7h2M11 7h2M3 11h2M7 11h2M11 11h2" stroke="#667" strokeWidth="2" /><path d="M17 5h8l-4 4z" fill="#222" /></svg>
            </IconButton>
          </LookTools>
        </LookRow>
        <Split>
          <Places>
            {placeArt.map(([label, art]) => (
              <Place key={label}><PlaceIcon>{art}</PlaceIcon>{label}</Place>
            ))}
          </Places>
          <Files>
            <ListPane>
              <FileTable>
                <colgroup><col width="272" /><col width="120" /><col width="58" /></colgroup>
                <thead>
                  <tr>
                    <th><HeadCell>Name<Caret /></HeadCell></th>
                    <th><SortMark><Caret color="#7fb9d8" /></SortMark>Date modified</th>
                    <th>Type</th>
                  </tr>
                </thead>
                <tbody>
                  {files.map((f) => (
                    <tr key={f.name} aria-selected={!!f.on}>
                      <td>
                        <NameCell>
                          <TickSlot>{f.on && <Tick defaultChecked aria-label={f.name} />}</TickSlot>
                          <DxfIcon />{f.name}
                        </NameCell>
                      </td>
                      <td>{f.date}</td>
                      <td>AutoCAD</td>
                    </tr>
                  ))}
                </tbody>
              </FileTable>
            </ListPane>
            <ListScroll>
              <svg width="5" height="8"><path d="M4 0V8L0 4Z" fill="#333" /></svg>
              <ListThumb />
              <svg width="5" height="8"><path d="M1 0V8L5 4Z" fill="#333" /></svg>
            </ListScroll>
            <FormRow $top={9}>
              <FormLabel htmlFor="file-name">File name:</FormLabel>
              <FileInputBox><FileInput id="file-name" defaultValue="ananda copy" /><Caret /></FileInputBox>
              <DialogButton $hot>Open</DialogButton>
            </FormRow>
            <FormRow $top={5}>
              <FormLabel>Files of type:</FormLabel>
              <Drop name="Files of type" value="AutoCAD Drawing Exchange Format (DXF)" w={246} h={22} look="face" font={ARIAL} size={11} pad={3} />
              <DialogButton>Cancel</DialogButton>
            </FormRow>
          </Files>
        </Split>
      </Browse>
      <PreviewPane>
        <PreviewHead>
          <span>2 Entities, 1200,00 X 400,00</span>
          <Check><Tick defaultChecked />Preview</Check>
        </PreviewHead>
        <PreviewBox>
          <Artwork />
          <Grip><svg width="8" height="8"><path d="M6 1h2M3 4h2M6 4h2M0 7h2M3 7h2M6 7h2" stroke="#bbb" strokeWidth="2" /></svg></Grip>
        </PreviewBox>
      </PreviewPane>
    </DialogBody>
  </Dialog>
);

/* ---------- page ---------- */
const squares = (a: string, b: string, c: string, kind: number) => (
  <svg width="14" height="14" viewBox="0 0 14 14" fill="none" aria-hidden="true">
    {kind === 0 && <><path d="M.500 4.500V.500H4.500V4.500ZM9.500 9.500H13.500V13.500H9.500Z" stroke={b} fill="#fff" /><rect x="3.500" y="3" width="7" height="7" fill={c} stroke={a} strokeWidth="1.500" /></>}
    {kind === 1 && <><rect x="3.500" y="3.500" width="7" height="7" stroke={a} /><path d="M.500 .500h5v5h-5zM8.500 8.500h5v5h-5z" fill={c} stroke={b} /></>}
    {kind === 2 && <><rect x="7" y="7" width="6" height="6" stroke={b} fill="#fff" /><rect x="1.500" y="1.500" width="8" height="8" fill={c} stroke={a} strokeWidth="1.500" /></>}
    {kind === 3 && <><rect x="5.500" y="5.500" width="7" height="7" fill="#fff" stroke={a} strokeWidth="1.500" /><rect x="1.500" y="1.500" width="6" height="6" fill="#fff" stroke={b} strokeWidth="1.500" /></>}
  </svg>
);

export default function App() {
  return (
    <Shell>
      <Global />
      <TitleBar>
        <Quick>
          <Brand size={16} />
          <QuickSep />
          <IconButton aria-label="New"><Art box={[99, 26, 42, 50]}><path d="M104 32H126L134 42V70H104Z" fill="#fafaff" stroke="#556" strokeWidth="3" /><path d="M125 32V42H134" stroke="#556" strokeWidth="2" /></Art></IconButton>
          <IconButton aria-label="Open"><Art box={[164, 24, 52, 48]}><path d="M167 66V38H180L184 42H200V48" fill="#f6d35b" stroke="#b98a1c" strokeWidth="3" /><path d="M167 67L176 48H210L200 67Z" fill="#fbe48a" stroke="#b98a1c" strokeWidth="3" /><path d="M192 34Q200 24 210 36M211 28V38H202" stroke="#14459c" strokeWidth="3" /></Art></IconButton>
          <Caret color="#555" w={5} />
          <IconButton aria-label="Save"><Art box={[284, 26, 48, 48]}><path d="M287 29H328V73H290L287 70Z" fill="#3d45a8" stroke="#1c2266" strokeWidth="3" /><path d="M295 30H320V50H295Z" fill="#e6e9f8" /><path d="M297 58H318V73H297Z" fill="#c9cbd6" /><path d="M301 60H307V71H301Z" fill="#334" /></Art></IconButton>
          <IconButton aria-label="Import"><Art box={[357, 28, 48, 48]}><path d="M361 32H374V62H361Z" fill="#9ab" stroke="#445" strokeWidth="3" /><path d="M364 40h7M364 46h7" stroke="#234" strokeWidth="3" /><path d="M374 72V54H383L387 58H400V72Z" fill="#f8dc6c" stroke="#b98a1c" strokeWidth="3" /><path d="M382 44Q386 34 396 38M398 32V42H390" stroke="#e8701c" strokeWidth="3" /></Art></IconButton>
          <QuickSep $tall />
          <IconButton aria-label="Undo"><Art box={[445, 36, 40, 28]}><path d="M450 52Q462 36 476 44Q486 54 472 62" stroke="#17479e" strokeWidth="4" /><path d="M447 38V56H464Z" fill="#17479e" /></Art></IconButton>
          <IconButton aria-label="Redo"><Art box={[516, 36, 42, 28]}><path d="M551 52Q539 36 525 44Q515 54 529 62" stroke="#c6c8cc" strokeWidth="4" /><path d="M555 38V56H538Z" fill="#c6c8cc" /></Art></IconButton>
          <QuickSep />
        </Quick>
        <Caption>ananda.dxf - CypCut Laser Cutting System6.3.763.8(Demo)</Caption>
        <WinButtons $gap={23} $end={11}>
          <IconButton aria-label="Minimize"><svg width="11" height="9"><rect x=".5" y="4.500" width="10" height="4" rx="1" fill="#fff" stroke="#555" /></svg></IconButton>
          <IconButton aria-label="Restore"><svg width="12" height="12" fill="#fff" stroke="#555"><rect x="4" y=".5" width="7.500" height="7" rx="1" /><rect x=".5" y="3.500" width="7.500" height="7.500" rx="1" /><rect x="3" y="6" width="2.500" height="2.500" /></svg></IconButton>
          <IconButton aria-label="Close window"><svg width="12" height="11" viewBox="0 0 12 11"><path d="M2 1L10 10M10 1L2 10" stroke="#555" strokeWidth="4" /><path d="M2 1L10 10M10 1L2 10" stroke="#fff" strokeWidth="2" /></svg></IconButton>
        </WinButtons>
      </TitleBar>
      <Tabs>
        <FileTab>File</FileTab>
        <Tab $on>Home</Tab>
        <Tab>Draw</Tab>
        <Tab>Nest</Tab>
        <Tab>CNC</Tab>
        <Tab>View</Tab>
        <TabsEnd>
          <IconButton aria-label="Collapse ribbon"><svg width="10" height="8" fill="none" stroke="#888"><path d="M1 5L5 1L9 5V7H7L5 5L3 7H1Z" /></svg></IconButton>
          <IconButton aria-label="Help"><svg width="16" height="16"><circle cx="8" cy="8" r="7.500" fill="#c3d3e8" /><circle cx="8" cy="8" r="6.500" fill="#1c55c8" /><text x="5" y="12" fontSize="11" fontWeight="700" fill="#fff" fontFamily={UI}>?</text></svg></IconButton>
        </TabsEnd>
      </Tabs>

      <Ribbon>
        <RGroup $w={113}>
          <RBody $pad={5}>
            <BigButton label="Select" w={50}><Art box={[54, 204, 72, 102]}><path d="M62 209V288L78 274L92 302L107 296L96 268H119Z" fill="#fff" stroke="#444" strokeWidth="4" /></Art></BigButton>
            <BigButton label="Display" w={52}><Art box={[200, 224, 87, 63]}><rect x="202" y="226" width="82" height="58" fill="#fff" stroke="#3d8ff0" strokeWidth="3" /><path d="M211 232h9v9h-9z" stroke="#080" strokeWidth="3" /><path d="M211 250h9v9h-9z" stroke="#99f" strokeWidth="3" /><path d="M211 268h9v9h-9z" stroke="#f90" strokeWidth="3" /><path d="M228 241H268" stroke="#090" strokeWidth="3" strokeDasharray="12 3" /><path d="M228 257H268M242 250L250 257L242 264" stroke="#99f" strokeWidth="3" /><path d="M228 274H268" stroke="#f9a08c" strokeWidth="3" /></Art></BigButton>
          </RBody>
          <RLabel $launch>View<IconButton aria-label="View options"><svg width="8" height="8" fill="none" stroke="#777"><path d="M.500 6V.500H7M3 3L7 7M7 3.500V7H3.500" /></svg></IconButton></RLabel>
        </RGroup>
        <RGroup $w={126}>
          <RBody>
            <BigButton label="Scale" w={54} off><Art box={[380, 214, 81, 78]}><rect x="382" y="217" width="76" height="73" fill="#eee" stroke="#bcbcbc" strokeWidth="3" /><path d="M385 252H425V288" stroke="#b4b4b4" strokeWidth="3" strokeDasharray="4 4" /><path d="M430 248L450 227M436 226H451V240" stroke="#aaa" strokeWidth="3" /></Art></BigButton>
            <BigButton label="Transform" w={62} off><Art box={[552, 214, 75, 78]}><rect x="556" y="241" width="43" height="46" stroke="#b8b8b8" strokeWidth="3" /><path d="M560 264L605 219L624 238L580 282Z" stroke="#b8b8b8" strokeWidth="3" strokeDasharray="5 3" /></Art></BigButton>
          </RBody>
          <RLabel>Geometry</RLabel>
        </RGroup>
        <RGroup $w={484}>
          <RBody $pad={5}>
            <BigButton label="Lead" w={42}><Art box={[750, 217, 93, 75]}><path d="M802 220V277Q810 284 840 283" stroke="#f0501c" strokeWidth="3" /><path d="M796 244L802 254L808 244" stroke="#f0501c" strokeWidth="4" /><path d="M752 283H784Q806 280 824 257" stroke="#0aa0a0" strokeWidth="4" /><path d="M762 276L772 283L762 290" stroke="#2cc" strokeWidth="4" /></Art></BigButton>
            <BigButton label="Clear" w={42} off><Art box={[876, 212, 87, 87]}><path d="M930 217L959 246L914 293Q907 298 900 293L881 274Q878 268 882 264Z" fill="#bdbdbd" /><path d="M898 248L930 278L914 293Q907 298 900 293L881 274Q878 268 882 264Z" fill="#f2f2f2" stroke="#c4c4c4" strokeWidth="3" /></Art></BigButton>
            <RDivider />
            <SmallCol $w={96}>
              <SmallButton label="Start Point"><Art box={[1020, 202, 48, 42]}><path d="M1042 212H1030Q1024 214 1024 226T1030 240H1044" stroke="#2a2ac0" strokeWidth="3" /><path d="M1046 212H1058Q1064 214 1064 226T1058 240H1044" stroke="#b8721c" strokeWidth="3" /><path d="M1034 204L1050 220M1050 204L1034 220M1030 212H1054" stroke="#f22" strokeWidth="3" /></Art></SmallButton>
              <SmallButton label="Reference"><Art box={[1020, 274, 48, 48]}><path d="M1020 297H1036M1050 297H1068M1043 274V288M1043 306V320" stroke="#22f" strokeWidth="3" /><path d="M1038 297H1048M1043 292V302" stroke="#f00" strokeWidth="4" /></Art></SmallButton>
              <SmallButton label="Compensate" off><Art box={[1020, 346, 48, 48]}><path d="M1023 388V376H1032V362Q1034 352 1044 352T1056 362V376H1065V388Z" stroke="#bbb" strokeWidth="3" /><path d="M1031 382H1040V364Q1044 358 1048 364V382H1058" stroke="#bbb" strokeWidth="3" /></Art></SmallButton>
            </SmallCol>
            <SmallCol $w={72}>
              <SmallButton label="Outer" off><Art box={[1307, 200, 48, 48]}><path d="M1313 216H1346V238H1313Z" fill="#ccc" /><path d="M1312 204L1322 214M1322 206V215H1313M1336 212L1344 204" stroke="#aaa" strokeWidth="3" /></Art></SmallButton>
              <SmallButton label="Inner" off><Art box={[1307, 274, 48, 48]}><path d="M1311 282H1346V312H1311Z" fill="#f2f2f2" stroke="#ccc" strokeWidth="6" /><path d="M1320 304L1324 292L1336 300M1324 292H1334" stroke="#aaa" strokeWidth="3" /></Art></SmallButton>
              <SmallButton label="Ring Cut"><Art box={[1307, 344, 48, 48]}><path d="M1308 367H1322M1316 360L1324 367L1316 374M1328 356V384M1320 376L1328 386L1336 376" stroke="#080" strokeWidth="3" /><circle cx="1338" cy="357" r="9" stroke="#f0501c" strokeWidth="3" strokeDasharray="6 3" /></Art></SmallButton>
            </SmallCol>
            <SmallCol $w={101}>
              <SmallButton label="Micro Joint" caret><Art box={[143, 202, 48, 42]}><path d="M143 221H156M180 221H191" stroke="#06d" strokeWidth="4" /><path d="M152 212L162 221L152 230ZM172 221L184 212V230Z" fill="#0a6cf0" /><path d="M162 221H172" stroke="#06d" strokeWidth="3" strokeDasharray="3 3" /></Art></SmallButton>
              <SmallButton label="Reverse" off caret><Art box={[146, 274, 48, 48]}><path d="M161 314V282L154 290M161 282L167 290M178 282V314L171 306M178 314L185 306" stroke="#b8b8b8" strokeWidth="3" /></Art></SmallButton>
              <SmallButton label="Seal" off caret><Art box={[143, 346, 48, 48]}><path d="M143 379H191M150 358L162 370L170 362L184 374M176 356L164 368" stroke="#bbb" strokeWidth="3" /></Art></SmallButton>
            </SmallCol>
            <SmallCol $w={112}>
              <SmallButton label="Relief"><Art box={[446, 202, 48, 48]}><path d="M452 246V226H460Q466 224 466 212L470 208H490" stroke="#06c" strokeWidth="3" /><path d="M452 222V208H466" stroke="#06c" strokeWidth="3" strokeDasharray="3 3" /></Art></SmallButton>
              <SmallButton label="Fillet"><Art box={[446, 274, 48, 48]}><path d="M448 281H470M488 298V318" stroke="#06c" strokeWidth="3" /><path d="M470 281L488 298" stroke="#184" strokeWidth="4" /><path d="M474 281H488V294" stroke="#06c" strokeWidth="3" strokeDasharray="3 3" /></Art></SmallButton>
              <SmallButton label="Cooling Point" caret><Art box={[446, 348, 48, 48]}><rect x="452" y="361" width="24" height="24" stroke="#2a8a00" strokeWidth="3" /><circle cx="478" cy="359" r="4" stroke="#48f" strokeWidth="3" fill="#fff" /></Art></SmallButton>
            </SmallCol>
          </RBody>
          <RLabel>Technique Setting</RLabel>
        </RGroup>
        <RGroup $w={204}>
          <RBody $pad={4}>
            <BigButton label="Sort" w={44}>
              <Art box={[820, 208, 93, 93]}>
                <ellipse cx="868" cy="254" rx="42" ry="42" fill="#101820" />
                <path d="M835 262Q838 284 866 286Q882 286 892 278Q886 296 866 296Q830 294 826 262Z" fill="#2b9ccf" /><path d="M828 268Q824 240 840 226Q856 206 884 214Q900 222 903 240L886 240Q884 226 868 224Q846 226 842 250Z" fill="#1c2a14" />
                <path d="M846 216Q880 200 900 224L904 236L912 240L888 262L870 240H882Q874 222 846 216Z" fill="#7dbb1e" />
                <path d="M822 266L842 244L862 268H852Q858 284 880 290Q850 300 832 278L830 266Z" fill="#36a9dc" />
                <ellipse cx="868" cy="252" rx="12" ry="22" fill="#fff" />
              </Art>
            </BigButton>
            <SortPane>
              <SortIcons>
                <IconButton aria-label="Bring forward">{squares("#ff9a3c", "#66c", "#fff4e8", 0)}</IconButton>
                <IconButton aria-label="Send backward">{squares("#ff9a3c", "#66c", "#a9a9ee", 1)}</IconButton>
                <IconButton aria-label="Bring to front">{squares("#f93", "#77c", "#ffc890", 2)}</IconButton>
                <IconButton aria-label="Send to back">{squares("#f93", "#06c", "#fff", 3)}</IconButton>
                <IconButton aria-label="Previous"><Art box={[1247, 230, 48, 36]}><path d="M1271 231V264L1252 247ZM1293 231V264L1273 247Z" fill="#0a5ed0" stroke="#04409c" strokeWidth="2" /></Art></IconButton>
                <IconButton aria-label="Next"><Art box={[1324, 230, 45, 36]}><path d="M1325 231V264L1345 247ZM1346 231V264L1366 247Z" fill="#0a5ed0" stroke="#04409c" strokeWidth="2" /></Art></IconButton>
              </SortIcons>
              <SortSlider type="range" min={0} max={10} defaultValue={0} aria-label="Sort position" />
              <svg width="138" height="8"><path d={Array.from({ length: 11 }, (_, i) => `M${11.5 + i * 12} 4v3`).join("")} stroke="#000" /></svg>
            </SortPane>
          </RBody>
          <RLabel>Sort</RLabel>
        </RGroup>
        <RGroup $w={427}>
          <RBody $pad={4}>
            <BigButton label="Nest" w={44}><Art box={[53, 209, 92, 92]}><path d="M55 211H143V298H55Z" fill="#dcd8ff" /><path d="M55 211H98V236H115V254H98V254H80V238H55Z" fill="#ffe3c4" /><path d="M98 211H143V273H116V236H98Z" fill="#dcffdc" /><path d="M55 238H80V254H98V270H80V298H55Z" fill="#4fa59c" /><path d="M55 211H143V298H55ZM98 211V236H116V273H143M55 238H80V254H98V270H80V298M98 254H116" stroke="#3b3b9c" strokeWidth="3" /></Art></BigButton>
            <BigButton label="Array" w={44} off><Art box={[185, 209, 90, 90]}><path d="M187 211h24v24h-24z" fill="#ccc" stroke="#bbb" strokeWidth="3" /><path d="M217 211h24v24h-24zM247 211h24v24h-24zM187 241h24v24h-24zM217 241h24v24h-24zM247 241h24v24h-24zM187 271h24v24h-24zM217 271h24v24h-24zM247 271h24v24h-24z" fill="#f0f0f0" stroke="#dcdcdc" strokeWidth="3" /></Art></BigButton>
            <BigButton label="Group" w={48}><Art box={[326, 215, 84, 81]}><rect x="328" y="217" width="43" height="43" fill="#eef2ff" stroke="#1b50e8" strokeWidth="3" /><rect x="355" y="244" width="49" height="49" fill="#e6ebff" stroke="#1b50e8" strokeWidth="3" /><rect x="355" y="244" width="16" height="16" fill="#ccd4ff" stroke="#7c90f0" strokeWidth="3" /></Art></BigButton>
            <BigButton label="FlyCut" w={50} off><Art box={[467, 209, 96, 93]}><path d="M469 211h18v18h-18zM493 211h18v18h-18zM517 211h18v18h-18zM541 211h18v18h-18zM469 235h18v18h-18zM493 235h18v18h-18zM517 235h18v18h-18zM541 235h18v18h-18zM469 260h18v18h-18zM493 260h18v18h-18zM517 260h18v18h-18zM541 260h18v18h-18zM469 284h18v16h-18zM493 284h18v16h-18zM517 284h18v16h-18zM541 284h18v16h-18z" fill="#f6f6f6" stroke="#dadada" strokeWidth="3" /><path d="M467 235H561M467 254H561M467 284H561M467 300H561M500 230L508 236L500 242M528 248L520 254L528 260" stroke="#bdbdbd" strokeWidth="2" /></Art></BigButton>
            <BigButton label="Coedge" w={58} off><Art box={[635, 215, 81, 81]}><path d="M637 217H712V292H637ZM681 217V292M637 254H681" fill="#f3f3f3" stroke="#c2c2c2" strokeWidth="3" /></Art></BigButton>
            <BigButton label="Bridge" w={50} noCaret><Art box={[797, 215, 81, 81]}><path d="M799 217H832V247H844V217H875V292H844V256H832V292H799Z" fill="#e8edff" stroke="#1b50e8" strokeWidth="3" /></Art></BigButton>
            <BigButton label="Measure" w={60}><Art box={[962, 217, 83, 78]}><path d="M964 218V292M1041 218V292" stroke="#222" strokeWidth="4" /><path d="M968 236H1038M976 228L968 236L976 244M1030 228L1038 236L1030 244" stroke="#06c" strokeWidth="3" /><text x="973" y="288" fontSize="30" fill="#06c" fontFamily={UI}>mm</text></Art></BigButton>
            <BigButton label="Optimize" w={64}><Art box={[1144, 209, 90, 90]}><path d="M1155 226H1218" stroke="#c0871c" strokeWidth="6" /><path d="M1222 220V282" stroke="#6c8c14" strokeWidth="6" /><path d="M1157 288H1225" stroke="#606080" strokeWidth="6" /><path d="M1155 226V284" stroke="#b06a6a" strokeWidth="6" /><path d="M1155 255V288" stroke="#22f" strokeWidth="6" /><path d="M1144 228L1155 214L1166 228Z" fill="#f93" /><path d="M1210 210L1226 222L1210 234Z" fill="#080" /><path d="M1212 280L1222 294L1232 280Z" fill="#bb2" /><path d="M1166 280L1150 289L1166 298Z" fill="#00f" /></Art></BigButton>
          </RBody>
          <RLabel>Tools</RLabel>
        </RGroup>
        <RGroup $w={56}>
          <RBody $pad={4}>
            <BigButton label="Layer" w={46}><Art box={[1336, 212, 93, 78]}><path d="M1366 254H1426L1402 284H1344Z" fill="#ffc9b4" stroke="#f08466" strokeWidth="3" /><path d="M1364 236H1424L1400 262H1342Z" fill="#bcdcfa" stroke="#2b7fd0" strokeWidth="3" /><path d="M1362 217H1426L1400 247H1338Z" fill="#8cc08c" stroke="#2f8a3a" strokeWidth="3" /></Art></BigButton>
          </RBody>
          <RLabel>Params</RLabel>
        </RGroup>
      </Ribbon>

      <Work>
        <ToolStrip>
          {toolPlan.map((t, i) =>
            t === "-" ? <StripRule key={i} /> : t === ">" ? <Flyout key={i} aria-label="More"><FlyMark /></Flyout> : <Tool key={i} aria-label={t}>{tools[t]}</Tool>
          )}
        </ToolStrip>
        <Center>
          <Board>
            <Ruler $side><VRuler /></Ruler>
            <Ruler><HRuler /></Ruler>
            <VScroll>
              <svg width="8" height="4"><path d="M0 4H8L4 0Z" fill="#888" /></svg>
              <Caret color="#888" />
            </VScroll>
            <Stage><StageArt /></Stage>
          </Board>
          <BottomBar>
            <LogTabs>
              <LogTab $on><G><path d="M1 2V13H12Z" fill="#cfe4ff" stroke="#1c4fa8" strokeWidth="2" /><path d="M7 9L14 1" stroke="#e8701c" strokeWidth="2" /><path d="M2 14.500H16" stroke="#d8a020" strokeWidth="3" /></G>Draw</LogTab>
              <LogTab><G><rect x="1" y="2" width="11" height="13" fill="#fff" stroke="#2a7fd0" /><path d="M1 3H12L16 7H4Z" fill="#2a8fe0" /><path d="M4 9h6M4 12h6" stroke="#8bd" /></G>System</LogTab>
              <LogTab><G><path d="M8 1L15.500 14.500H.500Z" fill="#ffe01a" stroke="#c89a00" /><path d="M8 5V10M8 11.500V13" stroke="#000" strokeWidth="2" /></G>Alarm</LogTab>
            </LogTabs>
            <HScroll>
              <svg width="4" height="8"><path d="M4 0V8L0 4Z" fill="#888" /></svg>
              <svg width="4" height="8"><path d="M0 0V8L4 4Z" fill="#888" /></svg>
            </HScroll>
          </BottomBar>
          <LogBox>
            <LogLines>
              {["Command: Paste", "Please specify insert point:", "Command: Align", "Command: Scale", "Undo:Scale", "Undo:Scale", "Command: Align", "Command: Delete"].map((l, i) => <LogLine key={i}>{l}</LogLine>)}
            </LogLines>
            <LogScroll>
              <svg width="7" height="4"><path d="M0 4H7L3.500 0Z" fill="#333" /></svg>
              <LogThumb />
              <Caret color="#333" />
            </LogScroll>
          </LogBox>
        </Center>
        <ToolStrip>
          <Tool aria-label="Layers"><svg width="16" height="12"><path d="M5 5H15.500L10 11H.500Z" fill="#4f94c8" stroke="#3d6f9c" /><path d="M5 1H15.500L10 7H.500Z" fill="#cfe6f6" stroke="#4f80a8" /></svg></Tool>
          <LayerText>Layer</LayerText>
          <Tool aria-label="Show all"><G><rect x=".5" y=".5" width="14" height="14" fill="#e8edf6" stroke="#6f7787" /><path d="M2 8L6 12L14 2" stroke="#3fa447" strokeWidth="2.500" /></G></Tool>
          <Tool aria-label="Hide all"><G><rect x=".5" y=".5" width="14" height="14" fill="#e8edf6" stroke="#6f7787" /><path d="M2 2L13 13M13 2L2 13" stroke="#f05050" /></G></Tool>
          {swatches.map((c) => <Tool key={c} aria-label={"Layer " + c}><Swatch $c={c} /></Tool>)}
          <Tool aria-label="First layer"><G><path d="M1 2H15" stroke="#4da64d" strokeWidth="2" /><path d="M2 8H14" stroke="#f7dcb0" strokeWidth="2" /><path d="M8 15V4M4.500 7.500L8 4L11.500 7.500" stroke="#4ab0ff" strokeWidth="1.500" /></G></Tool>
          <Tool aria-label="Last layer"><G><path d="M1 14H15" stroke="#4d4dff" strokeWidth="2" /><path d="M2 7H14" stroke="#f7dcb0" strokeWidth="2" /><path d="M8 1V12M4.500 8.500L8 12L11.500 8.500" stroke="#4ab0ff" strokeWidth="1.500" /></G></Tool>
        </ToolStrip>
        <Panel>
          <Card>
            <Drop name="Coordinate system" value="Floating coordinate" h={23} look="face" align="center" color="#ff0000" />
            <JogPad>
              <JogButton $c={4} $r={1} aria-label="Jog up"><Arrow turn={0} /></JogButton>
              <JogButton $c={8} $r={1} aria-label="Raise head"><Nozzle /></JogButton>
              <JogButton $c={2} $r={2} aria-label="Jog left"><Arrow turn={-90} /></JogButton>
              <JogButton $c={6} $r={2} aria-label="Jog right"><Arrow turn={90} /></JogButton>
              <JogPreview $h={21}>Preview</JogPreview>
              <JogButton $c={4} $r={3} aria-label="Jog down"><Arrow turn={180} /></JogButton>
              <JogButton $c={8} $r={3} aria-label="Lower head"><Nozzle down /></JogButton>
            </JogPad>
            <Row $top={8}>
              <Check><Tick />Fast</Check>
              <Spacer />
              <Spin name="Jog speed" value="20mm/s" w={59} mr={24} />
              <Check><Tick />Step</Check>
              <Spacer $w={14} />
              <Spin name="Step length" value="50,04mm" w={52} />
            </Row>
            <Row $top={2}>
              <Check><Tick />Jog Cut</Check>
              <Dots aria-label="Jog cut settings">···</Dots>
              <Spacer />
              <label>Burst:</label>
              <Spacer $w={9} />
              <Spin name="Burst" value="20%" w={52} />
            </Row>
            <ButtonGrid $top={26}>
              <PanelBtn label="Mark" h={24} />
              <PanelBtn label="Go Marker" h={24} />
              <PanelBtn label="Marker" h={24} tail icon={<svg width="12" height="9"><rect x=".5" y=".5" width="11" height="8" rx="1" fill="#5b9cf0" stroke="#2c68c8" /></svg>} />
              <PanelBtn h={26} label="Shutter" icon={<Led />} />
              <PanelBtn h={26} label="Aiming" icon={<Led />} />
              <PanelBtn h={26} label="Laser" icon={<Led />} />
              <PanelBtn h={26} label="Follow" icon={<Led />} />
              <PanelBtn h={26} label="Blow" icon={<Led />} />
              <PanelBtn h={26} label="Gas" tail />
            </ButtonGrid>
          </Card>
          <Field>
            <Legend>Machine Control</Legend>
            <ButtonGrid $top={0}>
              <PanelBtn label="Start*" icon={<G><path d="M5 3L11 8.500L5 14Z" fill="#0a5ed0" stroke="#04409c" /></G>} />
              <PanelBtn label="Pause" off icon={<G><path d="M5 3V13M11 3V13" stroke="#aaa" strokeWidth="4" /></G>} />
              <PanelBtn label="Stop" icon={<G><circle cx="8" cy="8" r="7.500" fill="#e01010" /><path d="M5 5L11 11M11 5L5 11" stroke="#fff" strokeWidth="2.500" /></G>} />
              <PanelBtn label="Frame" icon={<G><rect x="1.500" y="2.500" width="13" height="12" fill="#e4e6ff" stroke="#7779f5" /><circle cx="8" cy="9" r="4" fill="#5560e8" /><path d="M7 0L10 2.500L7 5" stroke="#22a" /></G>} />
              <PanelBtn label="Simu" icon={<G><path d="M5.500 3.500L11 8.500L5.500 13Z" stroke="#0a5a0a" strokeWidth="1.500" /></G>} />
              <PanelBtn label="Dry Run" icon={<G><path d="M5.500 3.500L11 8.500L5.500 13Z" stroke="#1b50e8" strokeWidth="1.500" /></G>} />
              <PanelBtn label="Loop" icon={<G><path d="M5 3H2.500V12H5M11 12H13.500V3H10M6 .500L8.500 3L6 5.500M10 9L7.500 12L10 14.500" stroke="#666" strokeWidth="1.500" /></G>} />
              <PanelBtn label="Pt LOC" off icon={<G><path d="M1 8H8M5 5L8 8L5 11" stroke="#aaa" strokeWidth="1.500" /><path d="M11 4V12M14.500 4V12" stroke="#aaa" strokeWidth="2" /></G>} />
              <PanelBtn label="Pt CONT" off icon={<G><path d="M3 4V12M6.500 4V12" stroke="#aaa" strokeWidth="2" /><path d="M8 4V12L14 8Z" fill="#aaa" /></G>} />
              <PanelBtn label="Back" off icon={<G><path d="M8 2V14L1 8ZM15 3V13L7 8Z" fill="#a6a6a6" /></G>} />
              <PanelBtn label="Forward" off icon={<G><path d="M8 2V14L15 8ZM1 3V13L9 8Z" fill="#a6a6a6" /></G>} />
              <PanelBtn label="Return Zero" />
            </ButtonGrid>
            <Row $top={8}>
              <Check><Tick defaultChecked />Process ends, go to</Check>
              <Spacer />
              <Drop name="Go to" value="Zero Point" w={93} h={22} />
            </Row>
            <Row><Check><Tick />Process selected only</Check></Row>
            <Row><Check><Tick />Soft limit protection</Check></Row>
            <Row><Check><Tick />Find edge before process</Check></Row>
            <Row>
              <label>Back/Forward Dis:</label>
              <Spacer />
              <Spin name="Back/Forward distance" value="9,91mm" w={67} mr={3} />
              <Spin name="Back/Forward speed" value="50mm/s" w={67} />
            </Row>
          </Field>
          <CounterField>
            <Legend>Counter</Legend>
            <CounterBody>
              <Stats>
                <dt>Time:</dt><dd>6hours13min12s</dd>
                <dt>Finished:</dt><dd>0</dd>
                <dt>Total:</dt><dd>100</dd>
              </Stats>
              <ManageSlot><PushButton $h={23} $w={73}>Manage</PushButton></ManageSlot>
            </CounterBody>
          </CounterField>
        </Panel>
      </Work>

      <Status>
        <Cell $w={104} $line $dark $mid>-408,73, 2066,92</Cell>
        <Cell $w={56} $line>Stop</Cell>
        <Cell $w={2} $line />
        <Drop name="Position" value="X:0,000 Y:0,000" w={150} h={22} look="face" align="center" size={11} mr={3} />
        <Cell $w={32} $line>Fine</Cell>
        <Cell $w={56} $off>Move Dis</Cell>
        <Drop name="Move distance" value="10" w={61} h={21} color="#777" arrow="#777" mr={1} />
        <Cell $w={36}>Demo</Cell>
      </Status>

      <Taskbar>
        <Orb aria-label="Start">
          <svg width="38" height="38" viewBox="0 0 38 38"><defs><radialGradient id="orb" cy=".75"><stop stopColor="#6fd6f5" /><stop offset=".6" stopColor="#1f6aa8" /><stop offset="1" stopColor="#123a5c" /></radialGradient></defs><circle cx="19" cy="19" r="17.500" fill="url(#orb)" stroke="#8fb4cc" /><path d="M10 11Q14 8 18 11L16 18Q12 15 8 18Z" fill="#f0602c" /><path d="M20 11Q24 14 29 11L27 18Q22 21 18 18Z" fill="#8cc63a" /><path d="M8 20Q12 17 16 20L14 27Q10 24 6 27Z" fill="#2f9be8" /><path d="M18 20Q22 23 27 20L25 27Q20 30 16 27Z" fill="#fdc72c" /></svg>
        </Orb>
        <Task $kind="stack" aria-label="Explorer"><LibraryArt /></Task>
        <Task aria-label="Chrome"><svg width="30" height="30" viewBox="0 0 30 30"><circle cx="15" cy="15" r="15" fill="#fcc934" /><path d="M2 7.500A15 15 0 0 1 28 7.500H15A7.500 7.500 0 0 0 8.500 11.200L8.500 18.800Z" fill="#ea4335" /><path d="M2 7.500L8.500 18.800A7.500 7.500 0 0 0 15 22.500L13 30A15 15 0 0 1 2 7.500" fill="#34a853" /><circle cx="15" cy="15" r="7" fill="#fff" /><circle cx="15" cy="15" r="5.500" fill="#4285f4" /></svg></Task>
        <Task aria-label="Word"><svg width="30" height="30" viewBox="0 0 30 30"><rect x="15" y="4" width="14" height="22" fill="#fff" stroke="#2b579a" /><path d="M18 8h9M18 12h9M18 16h9M18 20h9" stroke="#2b579a" strokeWidth="2" /><path d="M0 3L18 0V30L0 27Z" fill="#2b579a" /><text x="2" y="20" fontSize="14" fontWeight="700" fill="#fff" fontFamily={ARIAL}>W</text></svg></Task>
        <Task $kind="pinned" aria-label="Excel"><svg width="30" height="30" viewBox="0 0 30 30"><rect x="15" y="4" width="14" height="22" fill="#fff" stroke="#217346" /><path d="M18 8h9M18 12h9M18 16h9M18 20h9" stroke="#217346" strokeWidth="2" strokeDasharray="4 1" /><path d="M0 3L18 0V30L0 27Z" fill="#217346" /><text x="4" y="20" fontSize="14" fontWeight="700" fill="#fff" fontFamily={ARIAL}>X</text></svg></Task>
        <Task $kind="pinned" aria-label="TeamViewer"><svg width="32" height="32" viewBox="0 0 32 32"><rect width="32" height="32" rx="2" fill="#0e7fe0" /><circle cx="16" cy="16" r="13" fill="#fff" /><path d="M4 16L11 11V14H21V11L28 16L21 21V18H11V21Z" fill="#0e6fc8" /></svg></Task>
        <Task aria-label="WeChat"><svg width="32" height="28" viewBox="0 0 32 28"><ellipse cx="12" cy="11" rx="12" ry="10.500" fill="#2bd45a" /><path d="M4 18L3 24L9 20Z" fill="#2bd45a" /><ellipse cx="22" cy="18" rx="10" ry="8.500" fill="#ededed" /><path d="M26 24L29 28L22 26Z" fill="#ededed" /><g fill="#155"><circle cx="8" cy="8" r="1.500" /><circle cx="16" cy="8" r="1.500" /><circle cx="19" cy="16" r="1.200" /><circle cx="25" cy="16" r="1.200" /></g></svg></Task>
        <Task $kind="alert" aria-label="Spotify"><svg width="30" height="30" viewBox="0 0 30 30"><circle cx="15" cy="15" r="15" fill="#1ed760" /><path d="M6 10Q16 7 25 12M7 15Q16 12 23 17M8 20Q15 18 21 21" stroke="#14202a" strokeWidth="2.600" fill="none" strokeLinecap="round" /></svg></Task>
        <Task aria-label="Control panel"><svg width="32" height="30" viewBox="0 0 32 30"><rect x=".5" y=".5" width="31" height="23" rx="1" fill="#2f8fd8" stroke="#9fd0ee" /><circle cx="9" cy="10" r="5" fill="#8fcaf0" stroke="#d8eefb" /><path d="M9 10V5A5 5 0 0 1 14 10Z" fill="#f59a2c" /><path d="M18.500 6.500h8v3h-8zM18.500 13.500h8v3h-8z" fill="#7fc0ec" stroke="#d8eefb" /><circle cx="5" cy="19" r="1.500" fill="#f93" /><circle cx="9" cy="19" r="1.500" fill="#f93" /><circle cx="16" cy="25" r="4.500" fill="#d0d4d8" /></svg></Task>
        <Task aria-label="Zoom"><svg width="30" height="30" viewBox="0 0 30 30"><rect width="30" height="30" rx="9" fill="#4a8cff" /><rect x="6" y="10" width="12" height="10" rx="2" fill="#fff" /><path d="M19 14L24 10V20L19 16Z" fill="#fff" /></svg></Task>
        <Task $kind="active" aria-label="CypCut"><svg width="32" height="32" viewBox="0 0 32 32"><rect width="32" height="32" fill="#a8ba32" /><text x="2" y="15" fontSize="8" fontWeight="700" fill="#fff" fontFamily={UI}>SONGU</text><path d="M3 18.500H29" stroke="#f4f8d8" strokeWidth="4" strokeDasharray="3 1" /><path d="M3 23H29" stroke="#e4ecb8" strokeDasharray="2 1" /></svg></Task>
        <Tray>
          <Lang>EN</Lang>
          <KeyboardSlot><svg width="16" height="14" fill="none"><rect x=".5" y="5.500" width="15" height="8" rx="1" fill="#ddd" stroke="#999" /><path d="M2 8h12M2 10.500h12" stroke="#555" strokeDasharray="2 1" /><path d="M3 4Q6 0 8 2T13 1" stroke="#bbb" /></svg></KeyboardSlot>
          <TrayIcons>
            <svg width="10" height="4"><path d="M0 4H8L4 0Z" fill="#fff" /></svg>
            <svg width="16" height="16" fill="none"><path d="M1.500 1V15" stroke="#fff" strokeWidth="1.500" /><path d="M3 2H11V9H3Z" fill="#fff" /><circle cx="10.500" cy="10.500" r="4.500" fill="#d8261c" /><path d="M8.500 8.500l4 4M12.500 8.500l-4 4" stroke="#fff" strokeWidth="1.500" /></svg>
            <svg width="14" height="16" fill="none" stroke="#fff"><path d="M6 2H1.500V14.500H9V11" strokeWidth="2" /><path d="M7 4V7Q7 10 9.500 10T12 7V4ZM8 1V4M11 1V4" fill="#fff" /></svg>
            <svg width="15" height="12"><path d="M1 9v2M4 8v3M7 6v5M10 3v8M13 1v10" stroke="#fff" strokeWidth="2" /></svg>
            <svg width="14" height="14" fill="none" stroke="#fff"><path d="M1 5H3L7 1V13L3 9H1Z" fill="#fff" /><path d="M9 4Q11 7 9 10M11 2Q15 7 11 12" /></svg>
          </TrayIcons>
          <Clock>04:15 p.m.<br />15/04/2021</Clock>
          <Peek aria-label="Show desktop" />
        </Tray>
      </Taskbar>

      <ImportDialog />
    </Shell>
  );
}
